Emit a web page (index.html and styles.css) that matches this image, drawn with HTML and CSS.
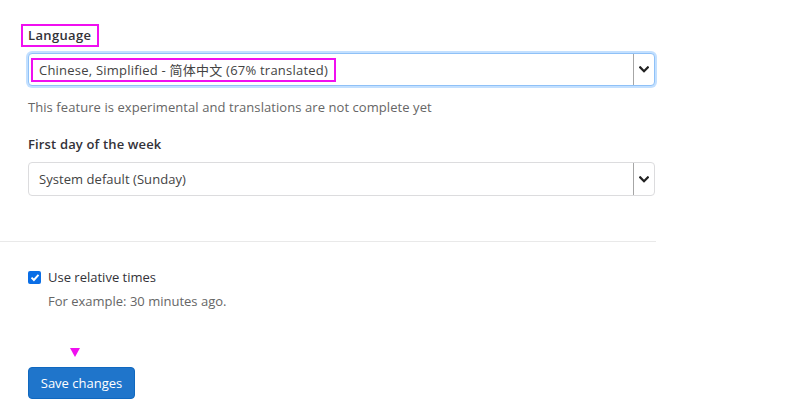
FILE: index.html
```html
<!DOCTYPE html>
<html lang="en">
<head>
<meta charset="utf-8">
<title>Preferences</title>
<link rel="stylesheet" href="styles.css">
</head>
<body>
<div class="settings">
  <div class="section">
    <div class="form-group">
      <label class="label label-annot">Language</label>
      <div class="select select-focus">
        <div class="select-value"><span class="value-annot">Chinese, Simplified - 简体中文 (67% translated)</span></div>
        <div class="select-arrow">
          <svg width="10" height="7" viewBox="0 0 10 7"><path d="M1.2 1.4 L5 5.2 L8.8 1.4" fill="none" stroke="#222" stroke-width="2.2" stroke-linecap="square"/></svg>
        </div>
      </div>
      <p class="help">This feature is experimental and translations are not complete yet</p>
    </div>
    <div class="form-group second">
      <label class="label">First day of the week</label>
      <div class="select select-tall">
        <div class="select-value">System default (Sunday)</div>
        <div class="select-arrow">
          <svg width="10" height="7" viewBox="0 0 10 7"><path d="M1.2 1.4 L5 5.2 L8.8 1.4" fill="none" stroke="#222" stroke-width="2.2" stroke-linecap="square"/></svg>
        </div>
      </div>
    </div>
  </div>
  <hr class="divider">
  <div class="section">
    <label class="check-row">
      <span class="checkbox">
        <svg width="10" height="9" viewBox="0 0 10 9"><path d="M1.5 4.6 L3.9 7 L8.5 1.8" fill="none" stroke="#fff" stroke-width="1.9"/></svg>
      </span>
      <span class="check-label">Use relative times</span>
    </label>
    <p class="check-help">For example: 30 minutes ago.</p>
    <div class="marker"></div>
    <button class="btn" type="button">Save changes</button>
  </div>
</div>
</body>
</html>
```
FILE: styles.css
```css
* { box-sizing: border-box; }
body {
  margin: 0;
  background: #fff;
  font-family: "Open Sans", "Noto Sans CJK SC", sans-serif;
  font-size: 13px;
  color: #333238;
}
.settings {
  width: 656px;
  padding-top: 24px;
}
.section {
  padding-left: 28px;
}
.form-group {
  display: flex;
  flex-direction: column;
  align-items: flex-start;
}
.second { margin-top: 19px; }
.label {
  font-weight: 600;
  line-height: 19px;
  color: #333238;
  letter-spacing: 0.15px;
}
.label-annot {
  border: 2px solid #f00ff0;
  margin-left: -7px;
  padding: 0 6px 0 5px;
  line-height: 19px;
  letter-spacing: 0.35px;
}
.second .label { margin-bottom: 8px; }
.select {
  width: 627px;
  height: 33px;
  display: flex;
  align-items: stretch;
  border: 1px solid #dcdcde;
  border-radius: 4px;
  background: #fff;
}
.select-tall { height: 34px; }
.select-focus {
  margin-top: 6px;
  border-color: #8fc1f7;
  box-shadow: 0 0 0 2px #c3e0ff;
}
.select-value {
  flex: 1;
  display: flex;
  align-items: center;
  padding-left: 10px;
  color: #434343;
  line-height: 18px;
  letter-spacing: 0.05px;
}
.value-annot {
  border: 2px solid #f00ff0;
  margin-left: -8px;
  padding: 1px 6px 1px 6px;
  height: 24px;
  display: flex;
  align-items: center;
  letter-spacing: 0.22px;
}
.select-arrow {
  width: 21px;
  border-left: 1px solid #a6a6a6;
  display: flex;
  align-items: center;
  justify-content: center;
}
.help {
  margin: 12px 0 0;
  line-height: 18px;
  color: #666;
  letter-spacing: 0.07px;
}
.divider {
  margin: 45px 0 0;
  border: 0;
  border-top: 1px solid #e9e9e9;
}
.check-row {
  display: flex;
  align-items: center;
  margin-top: 26px;
  line-height: 19px;
}
.checkbox {
  width: 13px;
  height: 13px;
  border-radius: 2px;
  background: #0a6ee6;
  display: flex;
  align-items: center;
  justify-content: center;
  margin-right: 7px;
}
.check-label { color: #333238; }
.check-help {
  margin: 5px 0 0 20px;
  line-height: 18px;
  color: #666;
}
.marker {
  margin: 38px 0 0 42px;
  width: 0;
  height: 0;
  border-left: 5px solid transparent;
  border-right: 5px solid transparent;
  border-top: 9px solid #f00ff0;
}
.btn {
  display: block;
  margin-top: 10px;
  height: 32px;
  width: 107px;
  padding: 0;
  border: 1px solid #1068bf;
  border-radius: 4px;
  background: #1f75cb;
  color: #fff;
  font-family: inherit;
  font-size: 13px;
  font-weight: 500;
}
```
